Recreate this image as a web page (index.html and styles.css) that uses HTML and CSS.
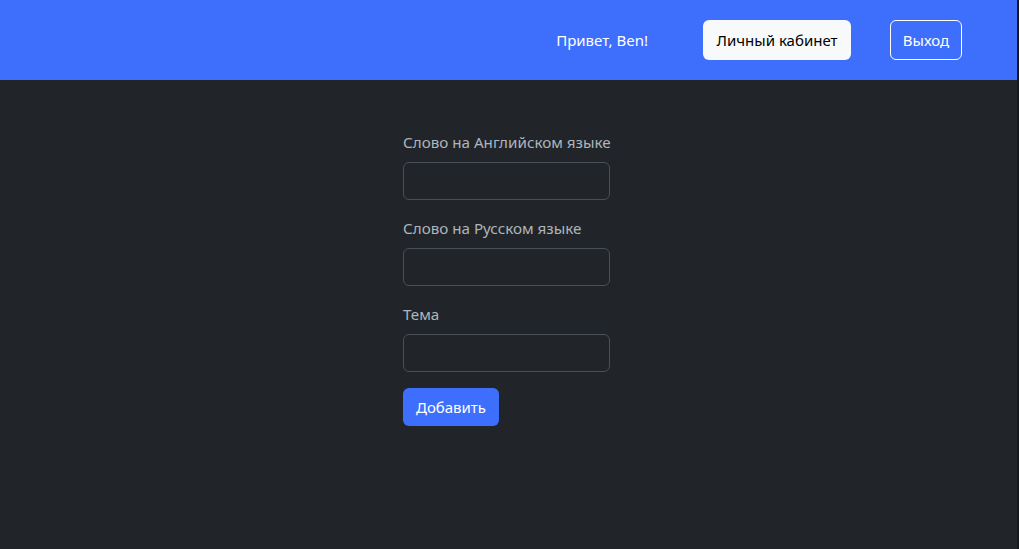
FILE: index.html
```html
<!DOCTYPE html>
<html lang="ru">
<head>
<meta charset="utf-8">
<title>Добавить слово</title>
<link rel="stylesheet" href="styles.css">
</head>
<body>
<div class="page">
  <header class="topbar">
    <span class="greet">Привет, Ben!</span>
    <a class="btn btn-light" href="#">Личный кабинет</a>
    <a class="btn btn-outline" href="#">Выход</a>
  </header>
  <main class="content">
    <form class="word-form">
      <div class="field">
        <label class="label" for="en">Слово на Английском языке</label>
        <input class="input" id="en" type="text">
      </div>
      <div class="field">
        <label class="label" for="ru">Слово на Русском языке</label>
        <input class="input" id="ru" type="text">
      </div>
      <div class="field">
        <label class="label" for="topic">Тема</label>
        <input class="input" id="topic" type="text">
      </div>
      <button class="btn btn-primary" type="button">Добавить</button>
    </form>
  </main>
</div>
</body>
</html>
```

FILE: styles.css
```css
html, body {
  margin: 0;
  padding: 0;
  height: 100%;
  background: #17191c;
}
body {
  font-family: "Noto Sans", "Open Sans", sans-serif;
  font-size: 16px;
  line-height: 24px;
  color: #dee2e6;
}
.page {
  width: calc(100% - 2px);
  height: 100%;
  background: #212529;
}
.topbar {
  height: 80px;
  box-sizing: border-box;
  background: #3d6ffc;
  display: flex;
  align-items: center;
  justify-content: flex-end;
  padding-right: 55px;
}
.greet {
  color: #ffffff;
  font-size: 15px;
  margin-right: 55px;
}
.btn {
  display: inline-block;
  box-sizing: border-box;
  font-family: inherit;
  font-size: 15px;
  line-height: 24px;
  padding: 7px 12px;
  border-radius: 6px;
  text-decoration: none;
  border: 1px solid transparent;
  cursor: pointer;
}
.btn-light {
  background: #f8f9fa;
  color: #000000;
  margin-right: 39px;
  width: 148px;
  text-align: center;
  height: 40px;
  padding: 7px 0;
}
.btn-outline {
  color: #ffffff;
  border-color: #ffffff;
  width: 72px;
  height: 40px;
  text-align: center;
  padding: 7px 0;
}
.content {
  padding-top: 50px;
}
.word-form {
  width: 207px;
  margin-left: 403px;
}
.field {
  margin-bottom: 16px;
}
.label {
  display: block;
  color: #adb5bd;
  font-size: 15.2px;
  line-height: 24px;
  margin-bottom: 8px;
  white-space: nowrap;
}
.input {
  display: block;
  box-sizing: border-box;
  width: 100%;
  height: 38px;
  background: #212529;
  border: 1px solid #495057;
  border-radius: 6px;
  color: #dee2e6;
  padding: 6px 12px;
  font-family: inherit;
  font-size: 15px;
}
.btn-primary {
  background: #3d6ffc;
  color: #ffffff;
  width: 96px;
  height: 38px;
  padding: 6px 0;
  text-align: center;
}
```
